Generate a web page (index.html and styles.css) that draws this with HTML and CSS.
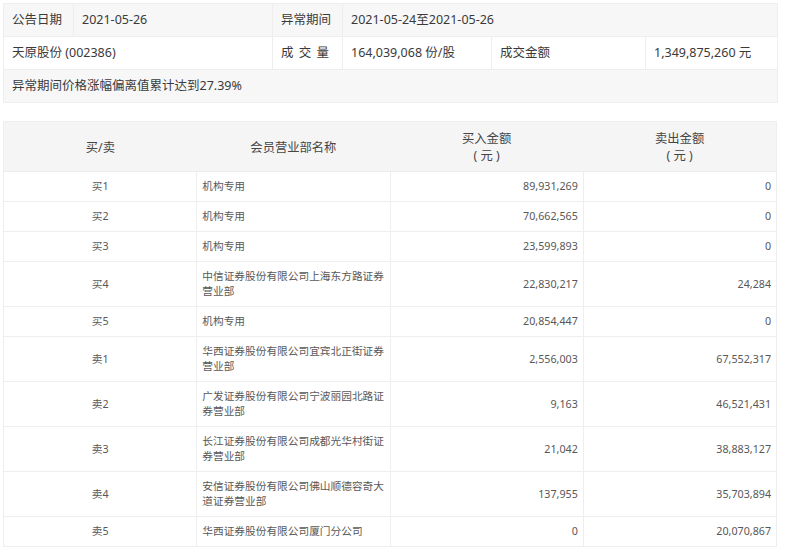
FILE: index.html
```html
<!DOCTYPE html>
<html lang="zh-CN">
<head>
<meta charset="utf-8">
<link rel="stylesheet" href="styles.css">
</head>
<body>
<div class="page">
  <table class="info">
    <colgroup>
      <col class="c70"><col class="c199"><col class="c70"><col class="c149"><col class="c154"><col class="c132">
    </colgroup>
    <tr class="odd">
      <td>公告日期</td>
      <td>2021-05-26</td>
      <td>异常期间</td>
      <td colspan="3">2021-05-24至2021-05-26</td>
    </tr>
    <tr>
      <td colspan="2">天原股份 (002386)</td>
      <td class="spaced">成 交 量</td>
      <td>164,039,068 份/股</td>
      <td>成交金额</td>
      <td>1,349,875,260 元</td>
    </tr>
    <tr class="odd">
      <td colspan="6">异常期间价格涨幅偏离值累计达到27.39%</td>
    </tr>
  </table>

  <table class="trades">
    <thead>
      <tr>
        <th>买/卖</th>
        <th>会员营业部名称</th>
        <th>买入金额<br>( 元 )</th>
        <th>卖出金额<br>( 元 )</th>
      </tr>
    </thead>
    <tbody>
      <tr><td class="side">买1</td><td class="name">机构专用</td><td class="num">89,931,269</td><td class="num">0</td></tr>
      <tr><td class="side">买2</td><td class="name">机构专用</td><td class="num">70,662,565</td><td class="num">0</td></tr>
      <tr><td class="side">买3</td><td class="name">机构专用</td><td class="num">23,599,893</td><td class="num">0</td></tr>
      <tr><td class="side">买4</td><td class="name">中信证券股份有限公司上海东方路证券营业部</td><td class="num">22,830,217</td><td class="num">24,284</td></tr>
      <tr><td class="side">买5</td><td class="name">机构专用</td><td class="num">20,854,447</td><td class="num">0</td></tr>
      <tr><td class="side">卖1</td><td class="name">华西证券股份有限公司宜宾北正街证券营业部</td><td class="num">2,556,003</td><td class="num">67,552,317</td></tr>
      <tr><td class="side">卖2</td><td class="name">广发证券股份有限公司宁波丽园北路证券营业部</td><td class="num">9,163</td><td class="num">46,521,431</td></tr>
      <tr><td class="side">卖3</td><td class="name">长江证券股份有限公司成都光华村街证券营业部</td><td class="num">21,042</td><td class="num">38,883,127</td></tr>
      <tr><td class="side">卖4</td><td class="name">安信证券股份有限公司佛山顺德容奇大道证券营业部</td><td class="num">137,955</td><td class="num">35,703,894</td></tr>
      <tr><td class="side">卖5</td><td class="name">华西证券股份有限公司厦门分公司</td><td class="num">0</td><td class="num">20,070,867</td></tr>
    </tbody>
  </table>
</div>
</body>
</html>
```

FILE: styles.css
```css
html, body {
  margin: 0;
  padding: 0;
  background: #ffffff;
}

body {
  font-family: "Noto Sans", "Noto Sans CJK SC", sans-serif;
}

.page {
  padding: 3px;
  display: flex;
  flex-direction: column;
  gap: 18px;
}

table {
  border-collapse: collapse;
  table-layout: fixed;
  width: 774px;
}

.c70 { width: 70px; }
.c199 { width: 199px; }
.c149 { width: 149px; }
.c154 { width: 154px; }
.c132 { width: 132px; }

.info td {
  border: 1px solid #eeeeee;
  font-size: 12.5px;
  line-height: 16px;
  padding: 8px 8px 8px 8px;
  color: #3a3a3a;
  white-space: nowrap;
}

.info tr.odd td {
  background: #f7f7f7;
}

.info td.spaced {
  letter-spacing: 1px;
}

.trades {
  border: 1px solid #efefef;
}

.trades th {
  background: #f5f5f5;
  color: #454545;
  font-weight: normal;
  font-size: 12.3px;
  line-height: 17px;
  padding: 8px 5px 7px;
  text-align: center;
  border-bottom: 1px solid #ececec;
  white-space: pre-line;
}

.trades td {
  font-size: 10.7px;
  line-height: 15px;
  padding: 7px 5px;
  color: #585858;
  border: 1px solid #eeeeee;
  vertical-align: middle;
}

.trades td.side {
  text-align: center;
}

.trades td.name {
  text-align: left;
}

.trades td.num {
  text-align: right;
}
```
